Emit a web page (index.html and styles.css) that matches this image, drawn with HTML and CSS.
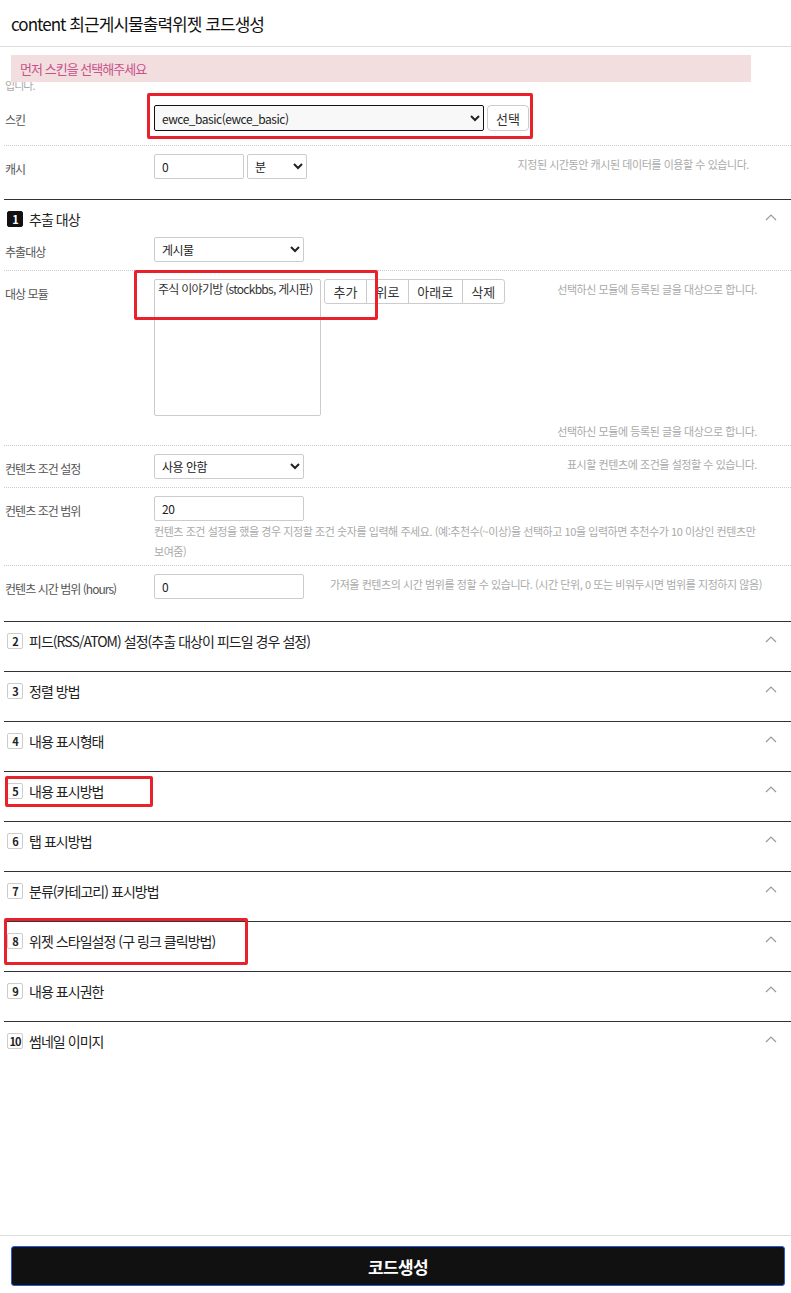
FILE: index.html
```html
<!DOCTYPE html>
<html lang="ko">
<head>
    <meta charset="UTF-8">
    <meta name="viewport" content="width=device-width, initial-scale=1.0">
    <title>content 최근게시물출력위젯 코드생성</title>
    <link rel="stylesheet" href="styles.css">
</head>
<body>
    <div class="modal">
        <div class="modal-head">
            <h1 class="modal-title">content 최근게시물출력위젯 코드생성</h1>
        </div>

        <div class="modal-body">
            <div class="alert">먼저 스킨을 선택해주세요</div>
            <p class="note">입니다.</p>

            <div class="basic">
                <div class="row row-skin">
                    <label class="row-label">스킨</label>
                    <div class="row-field">
                        <select class="input skin-select"><option>ewce_basic(ewce_basic)</option></select>
                        <button type="button" class="btn btn-pick">선택</button>
                    </div>
                </div>
                <div class="row">
                    <label class="row-label">캐시</label>
                    <div class="row-field">
                        <input type="text" class="input cache-input" value="0">
                        <select class="input unit-select"><option>분</option></select>
                        <p class="help help-side help-cache">지정된 시간동안 캐시된 데이터를 이용할 수 있습니다.</p>
                    </div>
                </div>
            </div>

            <!-- 1. 추출 대상 -->
            <section class="section section-open">
                <div class="section-head">
                    <span class="num num-on">1</span>
                    <h2 class="section-title">추출 대상</h2>
                    <svg class="chevron" width="12" height="8" viewBox="0 0 12 8"><path d="M1 7 L6 2 L11 7" fill="none" stroke="#9a9a9a" stroke-width="1.2"/></svg>
                </div>
                <div class="row">
                    <label class="row-label">추출대상</label>
                    <div class="row-field">
                        <select class="input wide-select"><option>게시물</option></select>
                    </div>
                </div>
                <div class="row">
                    <label class="row-label">대상 모듈</label>
                    <div class="row-field row-field-stack">
                        <div class="module-line">
                            <select class="module-list" multiple><option>주식 이야기방 (stockbbs, 게시판)</option></select>
                            <div class="btn-group">
                                <button type="button" class="btn">추가</button>
                                <button type="button" class="btn">위로</button>
                                <button type="button" class="btn">아래로</button>
                                <button type="button" class="btn">삭제</button>
                            </div>
                            <p class="help help-side">선택하신 모듈에 등록된 글을 대상으로 합니다.</p>
                        </div>
                        <p class="help help-under">선택하신 모듈에 등록된 글을 대상으로 합니다.</p>
                    </div>
                </div>
                <div class="row">
                    <label class="row-label">컨텐츠 조건 설정</label>
                    <div class="row-field">
                        <select class="input wide-select"><option>사용 안함</option></select>
                        <p class="help help-side">표시할 컨텐츠에 조건을 설정할 수 있습니다.</p>
                    </div>
                </div>
                <div class="row">
                    <label class="row-label">컨텐츠 조건 범위</label>
                    <div class="row-field row-field-stack">
                        <input type="text" class="input wide-input" value="20">
                        <p class="help help-block">컨텐츠 조건 설정을 했을 경우 지정할 조건 숫자를 입력해 주세요. (예:추천수(~이상)을 선택하고 10을 입력하면 추천수가 10 이상인 컨텐츠만<br>보여줌)</p>
                    </div>
                </div>
                <div class="row row-end">
                    <label class="row-label">컨텐츠 시간 범위 (hours)</label>
                    <div class="row-field">
                        <input type="text" class="input wide-input" value="0">
                        <p class="help help-after">가져올 컨텐츠의 시간 범위를 정할 수 있습니다. (시간 단위, 0 또는 비워두시면 범위를 지정하지 않음)</p>
                    </div>
                </div>
            </section>

            <section class="section is-closed">
                <div class="section-head">
                    <span class="num">2</span>
                    <h2 class="section-title">피드(RSS/ATOM) 설정(추출 대상이 피드일 경우 설정)</h2>
                    <svg class="chevron" width="12" height="8" viewBox="0 0 12 8"><path d="M1 7 L6 2 L11 7" fill="none" stroke="#9a9a9a" stroke-width="1.2"/></svg>
                </div>
            </section>
            <section class="section is-closed">
                <div class="section-head">
                    <span class="num">3</span>
                    <h2 class="section-title">정렬 방법</h2>
                    <svg class="chevron" width="12" height="8" viewBox="0 0 12 8"><path d="M1 7 L6 2 L11 7" fill="none" stroke="#9a9a9a" stroke-width="1.2"/></svg>
                </div>
            </section>
            <section class="section is-closed">
                <div class="section-head">
                    <span class="num">4</span>
                    <h2 class="section-title">내용 표시형태</h2>
                    <svg class="chevron" width="12" height="8" viewBox="0 0 12 8"><path d="M1 7 L6 2 L11 7" fill="none" stroke="#9a9a9a" stroke-width="1.2"/></svg>
                </div>
            </section>
            <section class="section is-closed">
                <div class="section-head">
                    <span class="num">5</span>
                    <h2 class="section-title">내용 표시방법</h2>
                    <svg class="chevron" width="12" height="8" viewBox="0 0 12 8"><path d="M1 7 L6 2 L11 7" fill="none" stroke="#9a9a9a" stroke-width="1.2"/></svg>
                </div>
            </section>
            <section class="section is-closed">
                <div class="section-head">
                    <span class="num">6</span>
                    <h2 class="section-title">탭 표시방법</h2>
                    <svg class="chevron" width="12" height="8" viewBox="0 0 12 8"><path d="M1 7 L6 2 L11 7" fill="none" stroke="#9a9a9a" stroke-width="1.2"/></svg>
                </div>
            </section>
            <section class="section is-closed">
                <div class="section-head">
                    <span class="num">7</span>
                    <h2 class="section-title">분류(카테고리) 표시방법</h2>
                    <svg class="chevron" width="12" height="8" viewBox="0 0 12 8"><path d="M1 7 L6 2 L11 7" fill="none" stroke="#9a9a9a" stroke-width="1.2"/></svg>
                </div>
            </section>
            <section class="section is-closed">
                <div class="section-head">
                    <span class="num">8</span>
                    <h2 class="section-title">위젯 스타일설정 (구 링크 클릭방법)</h2>
                    <svg class="chevron" width="12" height="8" viewBox="0 0 12 8"><path d="M1 7 L6 2 L11 7" fill="none" stroke="#9a9a9a" stroke-width="1.2"/></svg>
                </div>
            </section>
            <section class="section is-closed">
                <div class="section-head">
                    <span class="num">9</span>
                    <h2 class="section-title">내용 표시권한</h2>
                    <svg class="chevron" width="12" height="8" viewBox="0 0 12 8"><path d="M1 7 L6 2 L11 7" fill="none" stroke="#9a9a9a" stroke-width="1.2"/></svg>
                </div>
            </section>
            <section class="section is-closed">
                <div class="section-head">
                    <span class="num">10</span>
                    <h2 class="section-title">썸네일 이미지</h2>
                    <svg class="chevron" width="12" height="8" viewBox="0 0 12 8"><path d="M1 7 L6 2 L11 7" fill="none" stroke="#9a9a9a" stroke-width="1.2"/></svg>
                </div>
            </section>
        </div>

        <div class="modal-foot">
            <button type="button" class="btn-generate">코드생성</button>
        </div>

        <!-- red check marks drawn over the form -->
        <div class="mark mark-skin"></div>
        <div class="mark mark-module"></div>
        <div class="mark mark-sec5"></div>
        <div class="mark mark-sec8"></div>
    </div>
</body>
</html>
```

FILE: styles.css
```css
body {
    margin: 0;
    padding: 0;
    background-color: #fff;
    font-family: "Noto Sans CJK KR", "Noto Sans", sans-serif;
    color: #333;
    letter-spacing: -0.06em;
}

.modal {
    position: relative;
    height: 1293px;
    display: flex;
    flex-direction: column;
    overflow: hidden;
}

.modal-head {
    height: 46px;
    border-bottom: 1px solid #ddd;
    display: flex;
    align-items: center;
    padding-left: 11px;
}

.modal-title {
    margin: 0;
    font-size: 17px;
    font-weight: normal;
    color: #111;
}

.modal-body {
    position: relative;
    flex: 1;
    padding-left: 4px;
    overflow: hidden;
}

.alert {
    position: absolute;
    top: 8px;
    left: 11px;
    width: 740px;
    height: 27px;
    box-sizing: border-box;
    padding-left: 9px;
    background-color: #f2dede;
    color: #c9508c;
    font-size: 13px;
    line-height: 27px;
    z-index: 2;
}

.note {
    margin: 30px 0 0 1px;
    font-size: 11px;
    line-height: 16px;
    color: #aaa;
}

/* form rows */
.basic {
    padding-bottom: 12px;
}

.row {
    display: flex;
    padding: 8px 0;
    border-bottom: 1px dotted #ccc;
}

.row-skin {
    padding: 12px 0 14px;
}

.basic .row:last-child,
.row-end {
    border-bottom: none;
}

.row-label {
    width: 149px;
    padding: 6px 0 0 1px;
    font-size: 12px;
    line-height: 18px;
    color: #555;
    flex-shrink: 0;
}

.row-field {
    flex: 1;
    display: flex;
    align-items: flex-start;
}

.row-field-stack {
    flex-direction: column;
}

.input {
    height: 25px;
    box-sizing: border-box;
    border: 1px solid #ccc;
    border-radius: 2px;
    background-color: #fff;
    font-family: inherit;
    font-size: 12px;
    color: #222;
    padding: 0 7px;
    letter-spacing: -0.04em;
}

select.input {
    padding: 0 3px;
}

.skin-select {
    width: 330px;
    height: 26px;
    border-color: #111;
    background-color: #f8f8f8;
}

.cache-input {
    width: 90px;
}

.unit-select {
    width: 60px;
    margin-left: 3px;
}

.wide-select,
.wide-input {
    width: 150px;
}

.btn {
    height: 25px;
    padding: 0 8.5px;
    border: 1px solid #ccc;
    background-color: #fff;
    font-family: inherit;
    font-size: 13px;
    color: #333;
    cursor: pointer;
}

.btn-pick {
    width: 42px;
    height: 26px;
    padding: 0;
    margin-left: 3px;
    border-radius: 4px;
}

.module-line {
    display: flex;
    align-items: flex-start;
    width: 100%;
}

.module-list {
    width: 167px;
    height: 137px;
    border: 1px solid #ccc;
    border-radius: 2px;
    font-family: inherit;
    font-size: 12px;
    color: #333;
    padding: 0 1px;
    letter-spacing: -0.06em;
}

.btn-group {
    display: flex;
    margin-left: 3px;
}

.btn-group .btn + .btn {
    margin-left: -1px;
}

.btn-group .btn:first-child {
    border-radius: 3px 0 0 3px;
}

.btn-group .btn:last-child {
    border-radius: 0 3px 3px 0;
}

.help {
    margin: 0;
    font-size: 11px;
    line-height: 20px;
    color: #aaa;
    letter-spacing: -0.04em;
}

.help-side {
    flex: 1;
    text-align: right;
    padding-right: 34px;
}

.help-cache {
    padding-right: 42px;
}

.help-under {
    align-self: stretch;
    text-align: right;
    padding-right: 34px;
    margin-top: 9px;
    line-height: 12px;
}

.help-block {
    margin-bottom: -4px;
}

.help-after {
    margin-left: 26px;
    line-height: 20px;
}

/* accordion sections */
.section {
    border-top: 1px solid #333;
    padding-bottom: 12px;
}

.section-open {
    padding-bottom: 14px;
}

.section-head {
    display: flex;
    align-items: center;
    padding: 11px 0 2px 3px;
}

.is-closed .section-head {
    padding-bottom: 10px;
}

.num {
    width: 16px;
    height: 16px;
    box-sizing: border-box;
    border: 1px solid #ccc;
    border-radius: 2px;
    font-size: 11px;
    font-weight: bold;
    line-height: 14px;
    text-align: center;
    color: #222;
    letter-spacing: -0.08em;
}

.num-on {
    background-color: #111;
    border-color: #111;
    color: #fff;
}

.section-title {
    margin: 0 0 0 6px;
    font-size: 14px;
    font-weight: normal;
    line-height: 16px;
    color: #222;
}

.chevron {
    margin-left: auto;
    margin-right: 14px;
    margin-bottom: 4px;
}

/* footer */
.modal-foot {
    border-top: 1px solid #ddd;
    padding: 10px 6px 7px 11px;
}

.btn-generate {
    display: block;
    width: 100%;
    height: 40px;
    border: 1px solid #2a5bd7;
    border-radius: 3px;
    background-color: #111;
    color: #fff;
    font-family: inherit;
    font-size: 17px;
    font-weight: bold;
    letter-spacing: -0.04em;
}

.mark {
    position: absolute;
    box-sizing: border-box;
    border: 3px solid #e8212b;
    border-radius: 2px;
    z-index: 3;
}

.mark-skin {
    left: 147px;
    top: 93px;
    width: 386px;
    height: 46px;
}

.mark-module {
    left: 134px;
    top: 270px;
    width: 244px;
    height: 50px;
}

.mark-sec5 {
    left: 5px;
    top: 776px;
    width: 148px;
    height: 31px;
}

.mark-sec8 {
    left: 4px;
    top: 918px;
    width: 244px;
    height: 47px;
}
```
